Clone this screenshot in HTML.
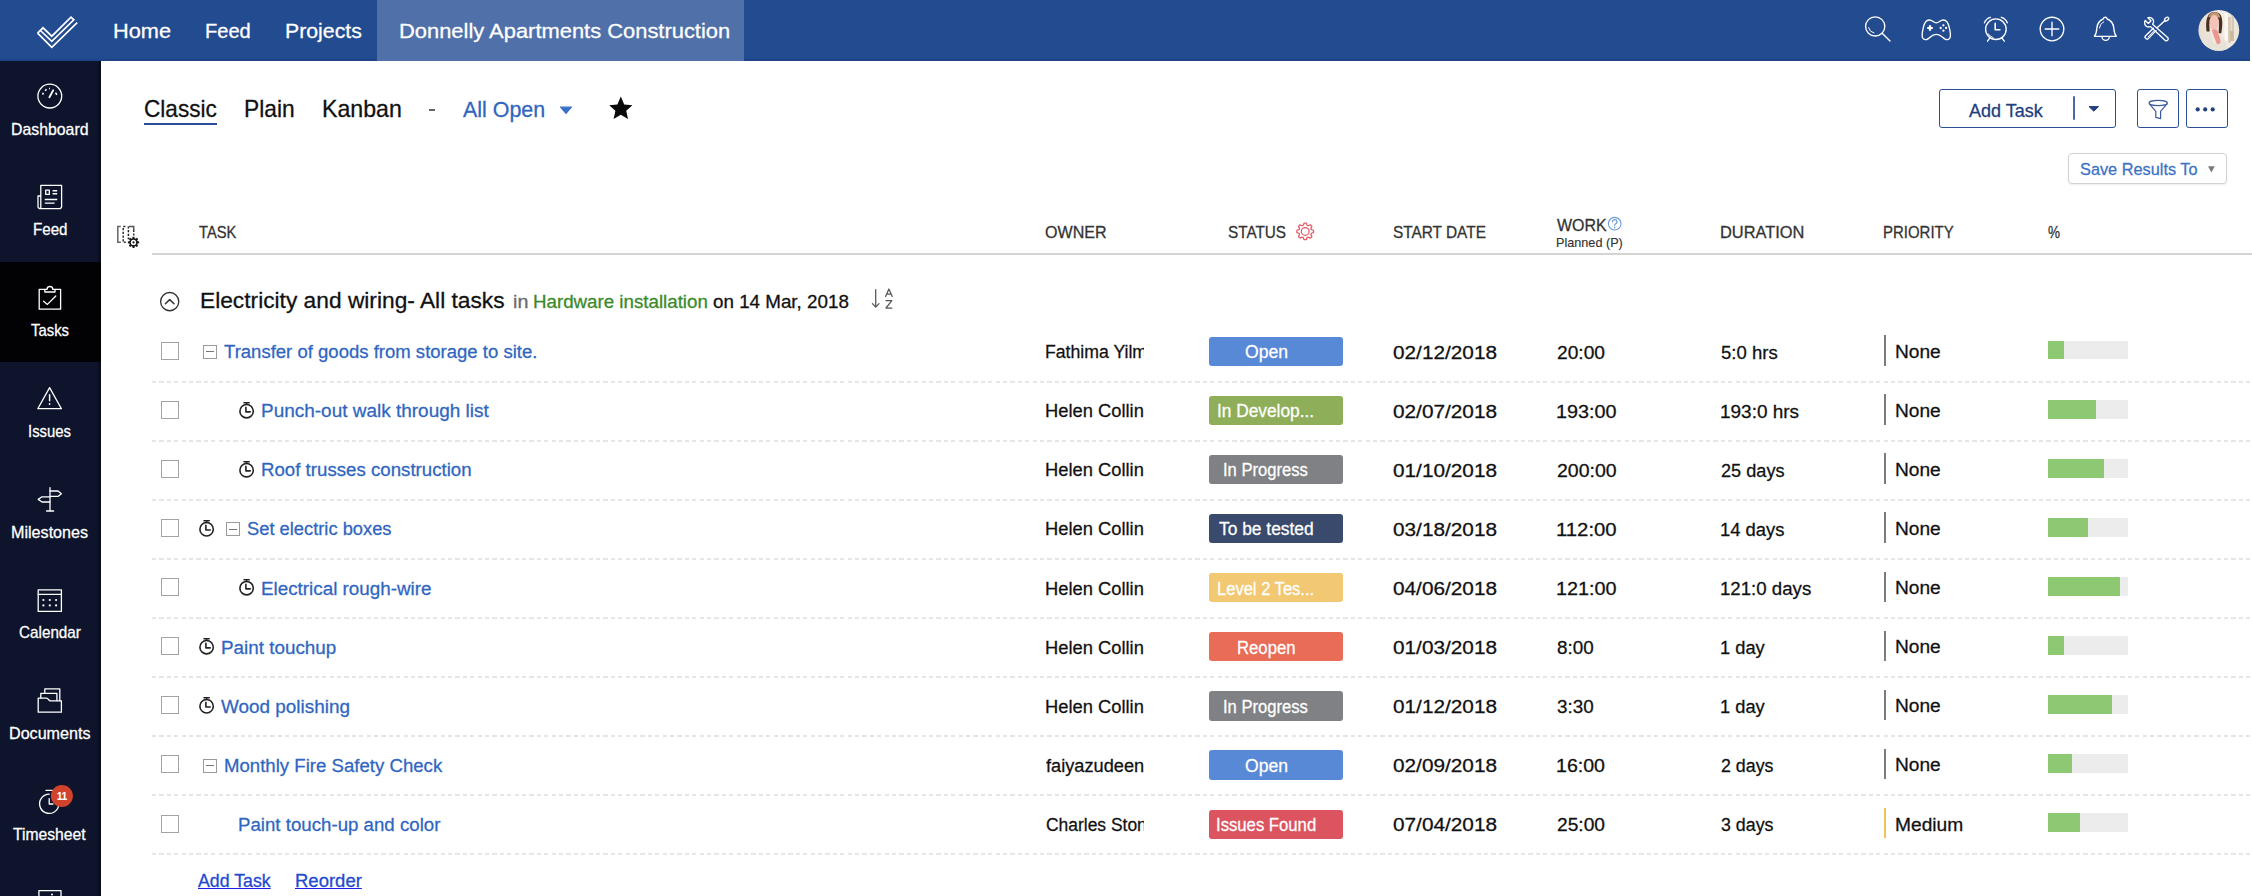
<!DOCTYPE html>
<html lang="en"><head><meta charset="utf-8"><title>Tasks - Donnelly Apartments Construction</title>
<style>
html,body{margin:0;padding:0}
body{width:2252px;height:896px;overflow:hidden;background:#fff;font-family:"Liberation Sans", sans-serif;position:relative}
.t{position:absolute;white-space:nowrap;line-height:normal;transform-origin:0 0;text-decoration:none;display:block;-webkit-text-stroke:.28px currentColor}
.i{position:absolute;overflow:visible;display:block}
header{position:absolute;left:0;top:0;width:2249.5px;height:61px;background:#234b90;box-shadow:inset 0 -2px 0 #1e4387}
header .act{position:absolute;left:376.6px;top:0;width:367.2px;height:61px;background:#4f70a9}
aside{position:absolute;left:0;top:61px;width:98px;height:835px;background:#0d142b;border-right:3px solid #080d20}
aside .on{position:absolute;left:0;top:200.6px;width:101px;height:100.8px;background:#020204}
main{position:absolute;left:101px;top:61px;width:2151px;height:835px}
main div,main i,main b{position:absolute;box-sizing:border-box;display:block}
.ul{left:43.3px;top:61.8px;width:72.6px;height:2.7px;background:#2b4f97}
.btn{border:1.4px solid #2b4f97;border-radius:3px;top:28.3px;height:38.6px;background:#fff}
.save{left:1967.3px;top:91.7px;width:158.8px;height:31.6px;border:1px solid #d2d2d2;border-radius:4px;background:#fff;box-shadow:0 1px 2px rgba(0,0,0,.08)}
.thead{left:0;top:150px;width:2151px;height:44px}
.hl{left:51px;top:192.2px;width:2100px;height:2px;background:#d4d4d4}
.row{left:51px;width:2100px;height:59.07px}
.sep{left:0;bottom:-1px;width:2100px;height:2px;background:repeating-linear-gradient(90deg,#e6e6e6 0,#e6e6e6 4.2px,transparent 4.2px,transparent 7.4px)}
.cb{left:9.3px;top:19.5px;width:18.1px;height:18px;border:1.3px solid #a3a3a3;background:#fff}
.bx{top:22.6px;width:14.2px;height:14px;border:1.2px solid #9a9a9a}
.bx:after{content:"";position:absolute;left:2px;right:2px;top:5.3px;height:1.1px;background:#777}
.own{left:894.0px;top:0;width:97.5px;height:59.07px;overflow:hidden}
.bdg{left:1057.2px;top:14.5px;width:133.9px;height:29.2px;border-radius:3px;overflow:hidden}
.pb{left:1732.4px;top:12.8px;width:2px;height:30.4px;background:#7c7c7c}
.trk{left:1895.7px;top:18.4px;width:80.4px;height:18.6px;background:#ececec}
.trk b{left:0;top:0;height:100%;background:#8dc873}
</style></head>
<body>
<header>
<div class="act"></div>
<svg class="i" style="left:30.0px;top:10.0px" width="56" height="44" viewBox="30 10 56 44"><g stroke="#fff" fill="none" stroke-width="1.7" stroke-linejoin="miter" stroke-linecap="butt"><path d="M37.6 33.2 L43 27.8 L51.8 36.2 L71 17.2 L73.8 19.8 L51.8 41.4 L40.4 30.5"/><path d="M37.6 33.2 L51.8 47.4 L77.2 22.6"/></g></svg>
<nav><a class="t" style="left:113.14px;top:19.10px;font-size:20.5px;color:#fff;transform:scaleX(1.0604);">Home</a><a class="t" style="left:205.22px;top:19.10px;font-size:20.5px;color:#fff;transform:scaleX(0.9796);">Feed</a><a class="t" style="left:285.46px;top:19.10px;font-size:20.5px;color:#fff;transform:scaleX(1.0371);">Projects</a><a class="t" style="left:399.33px;top:19.10px;font-size:20.5px;color:#fff;transform:scaleX(1.0686);">Donnelly Apartments Construction</a></nav>
<svg class="i" style="left:1855.0px;top:8.0px" width="330" height="48" viewBox="1855 8 330 48"><g stroke="#fff" fill="none" stroke-linecap="round" stroke-linejoin="round" stroke-width="1.35">
<circle cx="1875.2" cy="26.4" r="9.6"/><path d="M1882.2 33.2 L1890 41"/><path d="M1868.6 27.6 A6.8 6.8 0 0 0 1874 33" stroke-width="1"/>
<path d="M1936.3 22.9 C1933.5 22.9 1932.6 20 1929.2 20 C1925.4 20 1923.9 24.5 1923.2 28 C1922.4 31.5 1921.5 35.2 1922.6 37.8 C1923.6 40 1926.2 40.1 1927.9 38.9 C1930.3 37.2 1932 34.3 1936.3 34.3 C1940.6 34.3 1942.3 37.2 1944.7 38.9 C1946.4 40.1 1949 40 1950 37.8 C1951.1 35.2 1950.2 31.5 1949.4 28 C1948.7 24.5 1947.2 20 1943.4 20 C1940 20 1939.1 22.9 1936.3 22.9 Z"/>
<path d="M1930 25.2 V30.8 M1927.2 28 H1932.8" stroke-width="2.2" stroke-linecap="butt"/>
<g fill="#fff" stroke="none"><circle cx="1943.4" cy="25.3" r="1.15"/><circle cx="1943.4" cy="30.7" r="1.15"/><circle cx="1940.7" cy="28" r="1.15"/><circle cx="1946.1" cy="28" r="1.15"/></g>
<circle cx="1995.9" cy="29.2" r="10.3"/><path d="M1988 33.6 A9 9 0 0 0 1993 37.6" stroke-width="1"/>
<path d="M1995.2 23.4 V29.8 H1999.9" stroke-width="1.6"/>
<path d="M1984.4 22.8 A9 9 0 0 1 1990.4 17.3 M2001.3 17.3 A9 9 0 0 1 2007.3 22.8"/>
<path d="M1989.9 37.9 L1987.5 41.2 M2001.8 37.9 L2004.3 41.2"/>
<circle cx="2052" cy="29" r="11.8"/><path d="M2052 22.2 V35.8 M2045.2 29 H2058.8"/>
<path d="M2105.2 17.2 C2106.6 17.2 2107 18.2 2107.2 19 C2111.2 20.6 2113.4 24 2113.8 28 C2114.1 31.2 2114.2 33.8 2116.3 36.3 H2094.4 C2096.5 33.8 2096.6 31.2 2096.9 28 C2097.3 24 2099.2 20.6 2103.2 19 C2103.4 18.2 2103.8 17.2 2105.2 17.2 Z"/>
<path d="M2102 36.5 A3.7 3.9 0 0 0 2109.4 36.5"/><path d="M2099.6 28 C2100 25 2101.4 23 2103.8 21.8" stroke-width="1"/>
<path d="M2152.6 24.2 L2167.6 37.4 A1.9 1.9 0 0 1 2165 40.2 L2150.4 26.6 C2148 27.6 2145.6 26.6 2144.8 24.2 C2144.3 22.6 2144.6 21.4 2145.2 20.4 L2148.4 23.4 L2151 20.8 L2147.8 17.8 C2149.6 17.2 2151.6 17.6 2152.8 19.2 C2153.8 20.6 2153.8 22.6 2152.6 24.2 Z"/>
<path d="M2156 30.6 L2148.6 38.4 A1.9 1.9 0 0 1 2145.6 35.8 L2153.4 28.2"/><path d="M2148 37 L2153.6 31.2" stroke-width="1"/>
<path d="M2157.4 27.4 L2165 20.4"/><ellipse cx="2166.6" cy="19.2" rx="2.4" ry="1.5" transform="rotate(-42 2166.6 19.2)"/>
</g></svg>
<svg class="i" style="left:2197.0px;top:9.0px" width="43" height="43" viewBox="2197 9 43 43"><defs><clipPath id="av"><circle cx="2218.8" cy="30.3" r="20.4"/></clipPath>
<linearGradient id="avbg" x1="0" x2="1"><stop offset="0" stop-color="#e6dccd"/><stop offset=".5" stop-color="#f3eee6"/><stop offset="1" stop-color="#ebe3d6"/></linearGradient></defs>
<g clip-path="url(#av)"><rect x="2197" y="9" width="44" height="43" fill="url(#avbg)"/>
<rect x="2224.5" y="13" width="3.2" height="28" fill="#fbf8f3"/><rect x="2228.2" y="17" width="2.6" height="26" fill="#d9c7ab"/><rect x="2231.6" y="15" width="2.4" height="16" fill="#cfc9c2"/><rect x="2230.2" y="31" width="3.6" height="10" fill="#c9b79d"/>
<path d="M2206.6 31.5 C2205.6 24 2206 15.5 2211 12.8 C2214 11.4 2218.4 11.8 2220.4 14.6 C2223 18.4 2222.6 27 2221.2 33.6 L2218.6 33 L2219 24 L2209.4 24 L2209.6 31.5 Z" fill="#4a2e1e"/>
<path d="M2208.4 17.5 C2209 13.5 2212 12.2 2214.6 12.2 C2217.4 12.2 2220 13.8 2220.2 18 L2214.4 16 Z" fill="#c29a72"/>
<ellipse cx="2214.2" cy="22.6" rx="4.9" ry="7.6" fill="#f3c3b8"/>
<path d="M2199 52 C2199.6 42 2203.5 36.5 2209.8 34 L2214.6 44.5 L2218.6 34.5 C2224 36.5 2227.6 42 2228.4 52 Z" fill="#e9e2d8"/>
<path d="M2211.6 29.4 L2217 29.4 L2219.8 37.4 L2220.6 43 L2217.2 44.6 L2214.6 38.4 Z" fill="#ee9590"/>
</g></svg>
</header>
<aside>
<div class="on"></div>
<svg class="i" style="left:0.0px;top:0.0px" width="101" height="835" viewBox="0 61 101 835"><g stroke="#fff" fill="none" stroke-linecap="round" stroke-linejoin="round" stroke-width="1.3">
<circle cx="49.8" cy="96.1" r="11.9"/><path d="M49.4 97.2 L53.2 90.2" stroke-width="1.8"/>
<path d="M42.6 94.6 L43.4 92.8 M45 90.6 L46.6 89.4 M49 88.6 L50 88.6 M55.6 92.6 L56.8 94.8" stroke-width="1.5" stroke-linecap="butt"/>
<path d="M40.8 208.6 V185.4 H61.6 V206.4 A2.3 2.3 0 0 1 59.3 208.7 H40.3 A2.3 2.3 0 0 1 38 206.4 V196 H40.8"/>
<rect x="45.7" y="190.2" width="3.6" height="4.2"/><path d="M52.6 190.7 H57.2 M52.6 193.7 H57.2 M44.8 199.5 H57.2 M44.8 203.1 H54.6" stroke-width="1.4" stroke-linecap="butt"/>
<path d="M44.6 289.4 H39.2 V309.2 H60.6 V289.4 H55.2"/><path d="M44.8 292 V289.4 H47 A2.9 2.9 0 0 1 52.8 289.4 H55 V292 Z"/><path d="M43.6 301.2 L47.4 304.4 L55.8 296"/>
<path d="M49.6 387.6 L61.4 408.7 H37.8 Z"/><path d="M49.6 394.8 V400.8" stroke-width="1.5"/><circle cx="49.6" cy="404" r=".9" fill="#fff" stroke="none"/>
<path d="M50 487.6 V511 M46.6 511 H53.6"/><path d="M50 491 H58 L61.4 493.7 L58 496.4 H50 M50 496.8 H42 L38.2 499.4 L42 502 H50"/>
<rect x="38.2" y="589.8" width="23.2" height="21.6"/><path d="M38.2 594.4 H61.4"/>
<g fill="#fff" stroke="none"><circle cx="43.4" cy="600" r="1.1"/><circle cx="49.8" cy="600" r="1.1"/><circle cx="56.1" cy="600" r="1.1"/><circle cx="43.4" cy="605.4" r="1.1"/><circle cx="49.8" cy="605.4" r="1.1"/><circle cx="56.1" cy="605.4" r="1.1"/></g>
<path d="M38.2 712.2 V698.2 H46.6 C48.4 698.2 48.6 700.8 50.4 700.8 H61.4 V712.2 Z"/><path d="M40.8 698 V693.3 H56.9 V700.6 M44.8 693.2 V688.9 H59.8 V700.6"/>
<path d="M56.2 797.2 A9.6 9.6 0 1 1 49.2 794.2"/><path d="M49.2 798.6 V804 H53"/><path d="M46 790.4 H52.4"/>
<circle cx="61.9" cy="796" r="11" fill="#d1432b" stroke="none"/>
<path d="M38.9 896 V890.6 H61 V896"/><circle cx="52" cy="894.6" r="1" fill="#fff" stroke="none"/>
</g></svg>
<span class="t" style="left:11.02px;top:58.70px;font-size:16.2px;color:#fff;transform:scaleX(0.9781);">Dashboard</span><span class="t" style="left:32.87px;top:159.40px;font-size:16.2px;color:#fff;transform:scaleX(0.9343);">Feed</span><span class="t" style="left:30.80px;top:260.10px;font-size:16.2px;color:#fff;transform:scaleX(0.9193);">Tasks</span><span class="t" style="left:28.08px;top:360.80px;font-size:16.2px;color:#fff;transform:scaleX(0.9192);">Issues</span><span class="t" style="left:11.00px;top:461.50px;font-size:16.2px;color:#fff;transform:scaleX(0.9963);">Milestones</span><span class="t" style="left:18.75px;top:562.20px;font-size:16.2px;color:#fff;transform:scaleX(0.9427);">Calendar</span><span class="t" style="left:8.80px;top:662.90px;font-size:16.2px;color:#fff;transform:scaleX(0.9953);">Documents</span><span class="t" style="left:13.40px;top:763.60px;font-size:16.2px;color:#fff;transform:scaleX(0.9686);">Timesheet</span><span class="t" style="left:56.60px;top:728.80px;font-size:10.5px;color:#fff;transform:scaleX(0.9236);font-weight:700;-webkit-text-stroke-width:.15px;">11</span>
</aside>
<main>
<div class="views" style="left:0;top:0;width:700px;height:90px"><a class="t" style="left:42.68px;top:34.60px;font-size:23.2px;color:#111111;transform:scaleX(0.9743);">Classic</a><a class="t" style="left:142.82px;top:34.60px;font-size:23.2px;color:#111111;transform:scaleX(0.9826);">Plain</a><a class="t" style="left:221.20px;top:34.60px;font-size:23.2px;color:#111111;transform:scaleX(0.9981);">Kanban</a><i class="ul"></i><i style="left:328.4px;top:47.7px;width:5.2px;height:1.9px;background:#666"></i><a class="t" style="left:362.30px;top:37.30px;font-size:21.4px;color:#2f66c0;transform:scaleX(1.0007);">All Open</a><svg class="i" style="left:457.0px;top:40.0px" width="16" height="12" viewBox="558 101 16 12"><path d="M560.6 107.2 H571.4 L566 113.4 Z" fill="#3a70c8" stroke="#3a70c8" stroke-width="1.2" stroke-linejoin="round"/></svg><svg class="i" style="left:507.0px;top:33.0px" width="26" height="26" viewBox="608 94 26 26"><path transform="translate(620.8 108.6)" d="M0 -12 L3.4 -4.2 L11.6 -3.4 L5.4 2.2 L7.2 10.4 L0 6.2 L-7.2 10.4 L-5.4 2.2 L-11.6 -3.4 L-3.4 -4.2 Z" fill="#0a0a0a"/></svg></div>
<div class="btn" style="left:1838.0px;width:177.2px"><span class="t" style="left:29.40px;top:9.80px;font-size:18.4px;color:#21407f;transform:scaleX(0.9784);">Add Task</span><svg class="i" style="left:129.6px;top:3.3px" width="34" height="28" viewBox="2070 94 34 28"><path d="M2074 96.3 V119.7" stroke="#2b4f97" stroke-width="1.7"/><path d="M2089 106.6 H2098.6 L2093.8 111.2 Z" fill="#21407f" stroke="#21407f" stroke-width="1" stroke-linejoin="round"/></svg></div>
<div class="btn" style="left:2035.6px;width:42.4px"><svg class="i" style="left:8.0px;top:5.3px" width="26" height="26" viewBox="2146 96 26 26"><g fill="none" stroke="#3b5c9e" stroke-width="1.2" stroke-linejoin="round"><ellipse cx="2158.2" cy="103" rx="9.2" ry="2.7"/><path d="M2149.2 103.6 L2155.8 111.4 V117.4 L2160.6 118.6 V111.4 L2167.2 103.6"/></g></svg></div>
<div class="btn" style="left:2085.4px;width:41.4px"><svg class="i" style="left:4.2px;top:12.3px" width="28" height="12" viewBox="2192 103 28 12"><g fill="#21407f"><circle cx="2197.7" cy="109.4" r="2.1"/><circle cx="2205.2" cy="109.4" r="2.1"/><circle cx="2212.7" cy="109.4" r="2.1"/></g></svg></div>
<div class="save"><span class="t" style="left:11.20px;top:5.70px;font-size:17.4px;color:#3d72c4;transform:scaleX(0.9377);">Save Results To</span><svg class="i" style="left:136.7px;top:10.3px" width="12" height="12" viewBox="2206 164 12 12"><path d="M2208 166.2 H2214.8 L2211.4 172.6 Z" fill="#7a7a7a"/></svg></div>
<div class="thead"><span class="t" style="left:97.80px;top:13.30px;font-size:15.9px;color:#333;transform:scaleX(0.9257);">TASK</span><span class="t" style="left:944.10px;top:13.30px;font-size:15.9px;color:#333;transform:scaleX(1.0110);">OWNER</span><span class="t" style="left:1127.30px;top:13.30px;font-size:15.9px;color:#333;transform:scaleX(0.9627);">STATUS</span><span class="t" style="left:1292.00px;top:13.30px;font-size:15.9px;color:#333;transform:scaleX(0.9683);">START DATE</span><span class="t" style="left:1455.60px;top:5.80px;font-size:15.9px;color:#333;transform:scaleX(1.0053);">WORK</span><span class="t" style="left:1455.23px;top:24.00px;font-size:13px;color:#333;transform:scaleX(0.9730);-webkit-text-stroke-width:.15px;">Planned (P)</span><span class="t" style="left:1618.97px;top:13.30px;font-size:15.9px;color:#333;transform:scaleX(1.0320);">DURATION</span><span class="t" style="left:1782.46px;top:13.30px;font-size:15.9px;color:#333;transform:scaleX(0.9416);">PRIORITY</span><span class="t" style="left:1947.30px;top:13.30px;font-size:15.9px;color:#333;transform:scaleX(0.8500);">%</span><svg class="i" style="left:14.0px;top:13.0px" width="28" height="26" viewBox="115 224 28 26"><g fill="none" stroke-width="1.5"><path d="M120.8 226.6 H117.8 V242.3 H120.8" stroke="#666"/><path d="M125.4 226.6 H123.2 V242.3 H125.8" stroke="#333" stroke-dasharray="2.2 1.5"/><path d="M128.4 226.4 V239.2" stroke="#222" stroke-dasharray="2.2 1.5"/><path d="M129 226.6 H133.7 V230" stroke="#555"/><path d="M133.7 230 V236" stroke="#333" stroke-dasharray="2 1.4"/></g><g transform="translate(133.5 242.4)"><path fill="#1a1a1a" d="M3.76 -1.37 L5.63 -0.89 L5.63 0.89 L3.76 1.37 L3.63 1.69 L4.61 3.35 L3.35 4.61 L1.69 3.63 L1.37 3.76 L0.89 5.63 L-0.89 5.63 L-1.37 3.76 L-1.69 3.63 L-3.35 4.61 L-4.61 3.35 L-3.63 1.69 L-3.76 1.37 L-5.63 0.89 L-5.63 -0.89 L-3.76 -1.37 L-3.63 -1.69 L-4.61 -3.35 L-3.35 -4.61 L-1.69 -3.63 L-1.37 -3.76 L-0.89 -5.63 L0.89 -5.63 L1.37 -3.76 L1.69 -3.63 L3.35 -4.61 L4.61 -3.35 L3.63 -1.69 Z"/><circle r="2.6" fill="#fff"/><circle r="1.1" fill="#1a1a1a"/></g></svg><svg class="i" style="left:1193.0px;top:9.0px" width="22" height="22" viewBox="1294 220 22 22"><g transform="translate(1305.2 231.4)" fill="none" stroke="#e25a64" stroke-width="1.25" stroke-linejoin="round"><path d="M6.12 -1.87 L8.32 -1.17 L8.32 1.17 L6.12 1.87 L5.65 3.00 L6.71 5.06 L5.06 6.71 L3.00 5.65 L1.87 6.12 L1.17 8.32 L-1.17 8.32 L-1.87 6.12 L-3.00 5.65 L-5.06 6.71 L-6.71 5.06 L-5.65 3.00 L-6.12 1.87 L-8.32 1.17 L-8.32 -1.17 L-6.12 -1.87 L-5.65 -3.00 L-6.71 -5.06 L-5.06 -6.71 L-3.00 -5.65 L-1.87 -6.12 L-1.17 -8.32 L1.17 -8.32 L1.87 -6.12 L3.00 -5.65 L5.06 -6.71 L6.71 -5.06 L5.65 -3.00 Z"/><circle r="3.9"/></g></svg><svg class="i" style="left:1506.0px;top:4.0px" width="16" height="16" viewBox="1607 215 16 16"><g fill="none" stroke="#6b9ad8" stroke-linecap="round"><circle cx="1614.7" cy="223.7" r="6.3" stroke-width="1.1"/><path d="M1612.6 221.9 A2.2 2.2 0 1 1 1615.6 223.8 C1614.8 224.2 1614.7 224.7 1614.7 225.6" stroke-width="1.2"/></g><circle cx="1614.7" cy="227.6" r=".8" fill="#6b9ad8"/></svg></div>
<i class="hl"></i>
<div class="grp row" style="top:209px;height:52px"><svg class="i" style="left:7.0px;top:21.0px" width="22" height="22" viewBox="159 291 22 22"><circle cx="169.7" cy="301.6" r="9.1" fill="none" stroke="#333" stroke-width="1.35"/><path d="M165.4 303.8 L169.7 299.6 L174 303.8" fill="none" stroke="#333" stroke-width="1.5" stroke-linecap="round" stroke-linejoin="round"/></svg><span class="t" style="left:47.85px;top:17.70px;font-size:21.6px;color:#111111;transform:scaleX(1.0532);">Electricity and wiring- All tasks</span><span class="t" style="left:361.10px;top:21.70px;font-size:17.9px;color:#6a6a6a;transform:scaleX(1.1023);">in</span><a class="t" style="left:381.05px;top:21.70px;font-size:17.9px;color:#3a8a2a;transform:scaleX(1.0466);">Hardware installation</a><span class="t" style="left:561.10px;top:21.70px;font-size:17.9px;color:#111111;transform:scaleX(1.0506);">on 14 Mar, 2018</span><svg class="i" style="left:719.0px;top:17.0px" width="26" height="24" viewBox="871 287 26 24"><g fill="none" stroke="#555" stroke-width="1.25" stroke-linecap="round" stroke-linejoin="round"><path d="M875.7 289.6 V307 M872.4 303.6 L875.7 307.2 L879 303.6"/><path d="M885.6 296.4 L888.9 289 L892.2 296.4 M886.7 294 H891.1"/><path d="M886 300.6 H891.8 L886 308 H891.8"/></g></svg></div>
<div class="row" style="top:261.45px"><i class="cb"></i><i class="bx" style="left:51.3px"></i><a class="t" style="left:72.20px;top:18.80px;font-size:19.2px;color:#2f66c0;transform:scaleX(0.9656);">Transfer of goods from storage to site.</a><div class="own"><span class="t" style="left:-0.92px;top:18.80px;font-size:19.2px;color:#111111;transform:scaleX(0.9205);">Fathima Yilmaz</span></div><div class="bdg" style="background:#5889d6"><span class="t" style="left:35.70px;top:5.30px;font-size:18px;color:#fff;transform:scaleX(0.9762);">Open</span></div><span class="t" style="left:1241.00px;top:19.40px;font-size:19.2px;color:#111111;transform:scaleX(1.0833);">02/12/2018</span><span class="t" style="left:1405.00px;top:19.40px;font-size:19.2px;color:#111111;transform:scaleX(0.9991);">20:00</span><span class="t" style="left:1568.90px;top:19.40px;font-size:19.2px;color:#111111;transform:scaleX(0.9662);">5:0 hrs</span><i class="pb"></i><span class="t" style="left:1742.60px;top:18.50px;font-size:19.2px;color:#111111;transform:scaleX(0.9978);">None</span><div class="trk"><b style="width:20%"></b></div><i class="sep"></i></div>
<div class="row" style="top:320.52px"><i class="cb"></i><svg class="i" style="left:84.8px;top:18.0px" width="20" height="22" viewBox="236.8 399.52 20 22"><g fill="none" stroke="#222" stroke-linecap="round"><circle cx="246.4" cy="410.7" r="6.7" stroke-width="1.6"/><path d="M243.8 402.3 H249.0" stroke-width="1.5"/><path d="M246.4 402.3 V403.9" stroke-width="1.4"/><path d="M245.7 406.8 V411.4 H250.0" stroke-width="1.6" stroke-linejoin="round"/></g></svg><a class="t" style="left:108.91px;top:18.80px;font-size:19.2px;color:#2f66c0;transform:scaleX(0.9885);">Punch-out walk through list</a><div class="own"><span class="t" style="left:-0.96px;top:18.80px;font-size:19.2px;color:#111111;transform:scaleX(0.9560);">Helen Collins</span></div><div class="bdg" style="background:#8fae5a"><span class="t" style="left:8.14px;top:5.30px;font-size:18px;color:#fff;transform:scaleX(0.9611);">In Develop...</span></div><span class="t" style="left:1241.00px;top:19.40px;font-size:19.2px;color:#111111;transform:scaleX(1.0833);">02/07/2018</span><span class="t" style="left:1403.97px;top:19.40px;font-size:19.2px;color:#111111;transform:scaleX(1.0331);">193:00</span><span class="t" style="left:1567.91px;top:19.40px;font-size:19.2px;color:#111111;transform:scaleX(0.9884);">193:0 hrs</span><i class="pb"></i><span class="t" style="left:1742.60px;top:18.50px;font-size:19.2px;color:#111111;transform:scaleX(0.9978);">None</span><div class="trk"><b style="width:60%"></b></div><i class="sep"></i></div>
<div class="row" style="top:379.59px"><i class="cb"></i><svg class="i" style="left:84.8px;top:18.0px" width="20" height="22" viewBox="236.8 458.59 20 22"><g fill="none" stroke="#222" stroke-linecap="round"><circle cx="246.4" cy="469.8" r="6.7" stroke-width="1.6"/><path d="M243.8 461.4 H249.0" stroke-width="1.5"/><path d="M246.4 461.4 V463.0" stroke-width="1.4"/><path d="M245.7 465.9 V470.5 H250.0" stroke-width="1.6" stroke-linejoin="round"/></g></svg><a class="t" style="left:108.93px;top:18.80px;font-size:19.2px;color:#2f66c0;transform:scaleX(0.9729);">Roof trusses construction</a><div class="own"><span class="t" style="left:-0.96px;top:18.80px;font-size:19.2px;color:#111111;transform:scaleX(0.9560);">Helen Collins</span></div><div class="bdg" style="background:#7f8184"><span class="t" style="left:13.88px;top:5.30px;font-size:18px;color:#fff;transform:scaleX(0.9205);">In Progress</span></div><span class="t" style="left:1241.00px;top:19.40px;font-size:19.2px;color:#111111;transform:scaleX(1.0833);">01/10/2018</span><span class="t" style="left:1405.00px;top:19.40px;font-size:19.2px;color:#111111;transform:scaleX(1.0152);">200:00</span><span class="t" style="left:1568.90px;top:19.40px;font-size:19.2px;color:#111111;transform:scaleX(0.9458);">25 days</span><i class="pb"></i><span class="t" style="left:1742.60px;top:18.50px;font-size:19.2px;color:#111111;transform:scaleX(0.9978);">None</span><div class="trk"><b style="width:70%"></b></div><i class="sep"></i></div>
<div class="row" style="top:438.66px"><i class="cb"></i><svg class="i" style="left:44.8px;top:18.0px" width="20" height="22" viewBox="196.8 517.66 20 22"><g fill="none" stroke="#222" stroke-linecap="round"><circle cx="206.4" cy="528.9" r="6.7" stroke-width="1.6"/><path d="M203.8 520.5 H209.0" stroke-width="1.5"/><path d="M206.4 520.5 V522.1" stroke-width="1.4"/><path d="M205.7 525.0 V529.6 H210.0" stroke-width="1.6" stroke-linejoin="round"/></g></svg><i class="bx" style="left:74.0px"></i><a class="t" style="left:94.80px;top:18.80px;font-size:19.2px;color:#2f66c0;transform:scaleX(0.9540);">Set electric boxes</a><div class="own"><span class="t" style="left:-0.96px;top:18.80px;font-size:19.2px;color:#111111;transform:scaleX(0.9560);">Helen Collins</span></div><div class="bdg" style="background:#394a6c"><span class="t" style="left:9.70px;top:5.30px;font-size:18px;color:#fff;transform:scaleX(0.9654);">To be tested</span></div><span class="t" style="left:1241.00px;top:19.40px;font-size:19.2px;color:#111111;transform:scaleX(1.0833);">03/18/2018</span><span class="t" style="left:1403.94px;top:19.40px;font-size:19.2px;color:#111111;transform:scaleX(1.0595);">112:00</span><span class="t" style="left:1567.94px;top:19.40px;font-size:19.2px;color:#111111;transform:scaleX(0.9602);">14 days</span><i class="pb"></i><span class="t" style="left:1742.60px;top:18.50px;font-size:19.2px;color:#111111;transform:scaleX(0.9978);">None</span><div class="trk"><b style="width:50%"></b></div><i class="sep"></i></div>
<div class="row" style="top:497.73px"><i class="cb"></i><svg class="i" style="left:84.8px;top:18.0px" width="20" height="22" viewBox="236.8 576.73 20 22"><g fill="none" stroke="#222" stroke-linecap="round"><circle cx="246.4" cy="587.9" r="6.7" stroke-width="1.6"/><path d="M243.8 579.5 H249.0" stroke-width="1.5"/><path d="M246.4 579.5 V581.1" stroke-width="1.4"/><path d="M245.7 584.0 V588.6 H250.0" stroke-width="1.6" stroke-linejoin="round"/></g></svg><a class="t" style="left:109.32px;top:18.80px;font-size:19.2px;color:#2f66c0;transform:scaleX(0.9812);">Electrical rough-wire</a><div class="own"><span class="t" style="left:-0.96px;top:18.80px;font-size:19.2px;color:#111111;transform:scaleX(0.9560);">Helen Collins</span></div><div class="bdg" style="background:#f2c872"><span class="t" style="left:7.98px;top:5.30px;font-size:18px;color:#fff;transform:scaleX(0.9187);">Level 2 Tes...</span></div><span class="t" style="left:1241.00px;top:19.40px;font-size:19.2px;color:#111111;transform:scaleX(1.0833);">04/06/2018</span><span class="t" style="left:1403.97px;top:19.40px;font-size:19.2px;color:#111111;transform:scaleX(1.0331);">121:00</span><span class="t" style="left:1567.93px;top:19.40px;font-size:19.2px;color:#111111;transform:scaleX(0.9720);">121:0 days</span><i class="pb"></i><span class="t" style="left:1742.60px;top:18.50px;font-size:19.2px;color:#111111;transform:scaleX(0.9978);">None</span><div class="trk"><b style="width:90%"></b></div><i class="sep"></i></div>
<div class="row" style="top:556.80px"><i class="cb"></i><svg class="i" style="left:44.8px;top:18.0px" width="20" height="22" viewBox="196.8 635.8 20 22"><g fill="none" stroke="#222" stroke-linecap="round"><circle cx="206.4" cy="647.0" r="6.7" stroke-width="1.6"/><path d="M203.8 638.6 H209.0" stroke-width="1.5"/><path d="M206.4 638.6 V640.2" stroke-width="1.4"/><path d="M205.7 643.1 V647.7 H210.0" stroke-width="1.6" stroke-linejoin="round"/></g></svg><a class="t" style="left:68.92px;top:18.80px;font-size:19.2px;color:#2f66c0;transform:scaleX(0.9829);">Paint touchup</a><div class="own"><span class="t" style="left:-0.96px;top:18.80px;font-size:19.2px;color:#111111;transform:scaleX(0.9560);">Helen Collins</span></div><div class="bdg" style="background:#e96c57"><span class="t" style="left:27.57px;top:5.30px;font-size:18px;color:#fff;transform:scaleX(0.9289);">Reopen</span></div><span class="t" style="left:1241.00px;top:19.40px;font-size:19.2px;color:#111111;transform:scaleX(1.0833);">01/03/2018</span><span class="t" style="left:1405.00px;top:19.40px;font-size:19.2px;color:#111111;transform:scaleX(0.9816);">8:00</span><span class="t" style="left:1567.95px;top:19.40px;font-size:19.2px;color:#111111;transform:scaleX(0.9516);">1 day</span><i class="pb"></i><span class="t" style="left:1742.60px;top:18.50px;font-size:19.2px;color:#111111;transform:scaleX(0.9978);">None</span><div class="trk"><b style="width:20%"></b></div><i class="sep"></i></div>
<div class="row" style="top:615.87px"><i class="cb"></i><svg class="i" style="left:44.8px;top:18.0px" width="20" height="22" viewBox="196.8 694.87 20 22"><g fill="none" stroke="#222" stroke-linecap="round"><circle cx="206.4" cy="706.1" r="6.7" stroke-width="1.6"/><path d="M203.8 697.7 H209.0" stroke-width="1.5"/><path d="M206.4 697.7 V699.3" stroke-width="1.4"/><path d="M205.7 702.2 V706.8 H210.0" stroke-width="1.6" stroke-linejoin="round"/></g></svg><a class="t" style="left:69.00px;top:18.80px;font-size:19.2px;color:#2f66c0;transform:scaleX(0.9856);">Wood polishing</a><div class="own"><span class="t" style="left:-0.96px;top:18.80px;font-size:19.2px;color:#111111;transform:scaleX(0.9560);">Helen Collins</span></div><div class="bdg" style="background:#7f8184"><span class="t" style="left:13.88px;top:5.30px;font-size:18px;color:#fff;transform:scaleX(0.9205);">In Progress</span></div><span class="t" style="left:1241.00px;top:19.40px;font-size:19.2px;color:#111111;transform:scaleX(1.0833);">01/12/2018</span><span class="t" style="left:1405.00px;top:19.40px;font-size:19.2px;color:#111111;transform:scaleX(0.9816);">3:30</span><span class="t" style="left:1567.95px;top:19.40px;font-size:19.2px;color:#111111;transform:scaleX(0.9516);">1 day</span><i class="pb"></i><span class="t" style="left:1742.60px;top:18.50px;font-size:19.2px;color:#111111;transform:scaleX(0.9978);">None</span><div class="trk"><b style="width:80%"></b></div><i class="sep"></i></div>
<div class="row" style="top:674.94px"><i class="cb"></i><i class="bx" style="left:51.3px"></i><a class="t" style="left:71.63px;top:18.80px;font-size:19.2px;color:#2f66c0;transform:scaleX(0.9697);">Monthly Fire Safety Check</a><div class="own"><span class="t" style="left:0.00px;top:18.80px;font-size:19.2px;color:#111111;transform:scaleX(0.9484);">faiyazudeen.m</span></div><div class="bdg" style="background:#5889d6"><span class="t" style="left:35.70px;top:5.30px;font-size:18px;color:#fff;transform:scaleX(0.9762);">Open</span></div><span class="t" style="left:1241.00px;top:19.40px;font-size:19.2px;color:#111111;transform:scaleX(1.0833);">02/09/2018</span><span class="t" style="left:1403.98px;top:19.40px;font-size:19.2px;color:#111111;transform:scaleX(1.0206);">16:00</span><span class="t" style="left:1568.90px;top:19.40px;font-size:19.2px;color:#111111;transform:scaleX(0.9278);">2 days</span><i class="pb"></i><span class="t" style="left:1742.60px;top:18.50px;font-size:19.2px;color:#111111;transform:scaleX(0.9978);">None</span><div class="trk"><b style="width:30%"></b></div><i class="sep"></i></div>
<div class="row" style="top:734.01px"><i class="cb"></i><a class="t" style="left:86.33px;top:18.80px;font-size:19.2px;color:#2f66c0;transform:scaleX(0.9730);">Paint touch-up and color</a><div class="own"><span class="t" style="left:0.00px;top:18.80px;font-size:19.2px;color:#111111;transform:scaleX(0.9089);">Charles Stone</span></div><div class="bdg" style="background:#dc5460"><span class="t" style="left:6.57px;top:5.30px;font-size:18px;color:#fff;transform:scaleX(0.9269);">Issues Found</span></div><span class="t" style="left:1241.00px;top:19.40px;font-size:19.2px;color:#111111;transform:scaleX(1.0833);">07/04/2018</span><span class="t" style="left:1405.00px;top:19.40px;font-size:19.2px;color:#111111;transform:scaleX(0.9991);">25:00</span><span class="t" style="left:1568.90px;top:19.40px;font-size:19.2px;color:#111111;transform:scaleX(0.9278);">3 days</span><i class="pb" style="background:#f0c25e"></i><span class="t" style="left:1742.60px;top:18.50px;font-size:19.2px;color:#111111;transform:scaleX(0.9991);">Medium</span><div class="trk"><b style="width:40%"></b></div><i class="sep"></i></div>
<div class="foot" style="left:0;top:800px;width:600px;height:35px"><a class="t" style="left:97.30px;top:10.10px;font-size:18.1px;color:#2249d0;transform:scaleX(0.9804);text-decoration:underline;text-decoration-color:#1c1ce6">Add Task</a><a class="t" style="left:194.48px;top:10.10px;font-size:18.1px;color:#2249d0;transform:scaleX(1.0226);text-decoration:underline;text-decoration-color:#1c1ce6">Reorder</a></div>
</main>
</body></html>
